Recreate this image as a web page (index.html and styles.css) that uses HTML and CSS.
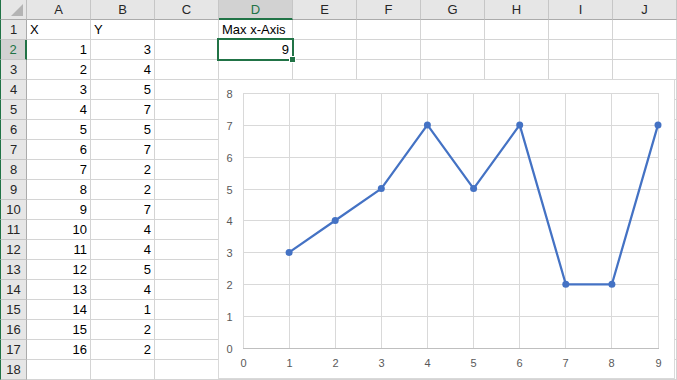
FILE: index.html
```html
<!DOCTYPE html>
<html lang="en">
<head>
    <meta charset="UTF-8">
    <meta name="viewport" content="width=device-width, initial-scale=1.0">
    <title>Max x-Axis</title>
    <link rel="stylesheet" href="styles.css">
</head>
<body>
    <div class="sheet">
        <div class="row head">
            <div class="corner"><span class="tri"></span></div>
            <div class="ch">A</div><div class="ch">B</div><div class="ch">C</div><div class="ch sel">D</div><div class="ch">E</div>
            <div class="ch">F</div><div class="ch">G</div><div class="ch">H</div><div class="ch">I</div><div class="ch">J</div>
        </div>
        <div class="row"><div class="rh">1</div><div class="c">X</div><div class="c">Y</div><div class="c"></div><div class="c">Max x-Axis</div><div class="c"></div><div class="c"></div><div class="c"></div><div class="c"></div><div class="c"></div><div class="c"></div></div>
        <div class="row"><div class="rh sel">2</div><div class="c n">1</div><div class="c n">3</div><div class="c"></div><div class="c n active">9<span class="handle"></span></div><div class="c"></div><div class="c"></div><div class="c"></div><div class="c"></div><div class="c"></div><div class="c"></div></div>
        <div class="row"><div class="rh">3</div><div class="c n">2</div><div class="c n">4</div><div class="c"></div><div class="c"></div><div class="c"></div><div class="c"></div><div class="c"></div><div class="c"></div><div class="c"></div><div class="c"></div></div>
        <div class="row"><div class="rh">4</div><div class="c n">3</div><div class="c n">5</div><div class="c"></div><div class="c"></div><div class="c"></div><div class="c"></div><div class="c"></div><div class="c"></div><div class="c"></div><div class="c"></div></div>
        <div class="row"><div class="rh">5</div><div class="c n">4</div><div class="c n">7</div><div class="c"></div><div class="c"></div><div class="c"></div><div class="c"></div><div class="c"></div><div class="c"></div><div class="c"></div><div class="c"></div></div>
        <div class="row"><div class="rh">6</div><div class="c n">5</div><div class="c n">5</div><div class="c"></div><div class="c"></div><div class="c"></div><div class="c"></div><div class="c"></div><div class="c"></div><div class="c"></div><div class="c"></div></div>
        <div class="row"><div class="rh">7</div><div class="c n">6</div><div class="c n">7</div><div class="c"></div><div class="c"></div><div class="c"></div><div class="c"></div><div class="c"></div><div class="c"></div><div class="c"></div><div class="c"></div></div>
        <div class="row"><div class="rh">8</div><div class="c n">7</div><div class="c n">2</div><div class="c"></div><div class="c"></div><div class="c"></div><div class="c"></div><div class="c"></div><div class="c"></div><div class="c"></div><div class="c"></div></div>
        <div class="row"><div class="rh">9</div><div class="c n">8</div><div class="c n">2</div><div class="c"></div><div class="c"></div><div class="c"></div><div class="c"></div><div class="c"></div><div class="c"></div><div class="c"></div><div class="c"></div></div>
        <div class="row"><div class="rh">10</div><div class="c n">9</div><div class="c n">7</div><div class="c"></div><div class="c"></div><div class="c"></div><div class="c"></div><div class="c"></div><div class="c"></div><div class="c"></div><div class="c"></div></div>
        <div class="row"><div class="rh">11</div><div class="c n">10</div><div class="c n">4</div><div class="c"></div><div class="c"></div><div class="c"></div><div class="c"></div><div class="c"></div><div class="c"></div><div class="c"></div><div class="c"></div></div>
        <div class="row"><div class="rh">12</div><div class="c n">11</div><div class="c n">4</div><div class="c"></div><div class="c"></div><div class="c"></div><div class="c"></div><div class="c"></div><div class="c"></div><div class="c"></div><div class="c"></div></div>
        <div class="row"><div class="rh">13</div><div class="c n">12</div><div class="c n">5</div><div class="c"></div><div class="c"></div><div class="c"></div><div class="c"></div><div class="c"></div><div class="c"></div><div class="c"></div><div class="c"></div></div>
        <div class="row"><div class="rh">14</div><div class="c n">13</div><div class="c n">4</div><div class="c"></div><div class="c"></div><div class="c"></div><div class="c"></div><div class="c"></div><div class="c"></div><div class="c"></div><div class="c"></div></div>
        <div class="row"><div class="rh">15</div><div class="c n">14</div><div class="c n">1</div><div class="c"></div><div class="c"></div><div class="c"></div><div class="c"></div><div class="c"></div><div class="c"></div><div class="c"></div><div class="c"></div></div>
        <div class="row"><div class="rh">16</div><div class="c n">15</div><div class="c n">2</div><div class="c"></div><div class="c"></div><div class="c"></div><div class="c"></div><div class="c"></div><div class="c"></div><div class="c"></div><div class="c"></div></div>
        <div class="row"><div class="rh">17</div><div class="c n">16</div><div class="c n">2</div><div class="c"></div><div class="c"></div><div class="c"></div><div class="c"></div><div class="c"></div><div class="c"></div><div class="c"></div><div class="c"></div></div>
        <div class="row"><div class="rh">18</div><div class="c"></div><div class="c"></div><div class="c"></div><div class="c"></div><div class="c"></div><div class="c"></div><div class="c"></div><div class="c"></div><div class="c"></div><div class="c"></div></div>

        <!-- floating chart, sits over D4:J18 -->
        <div class="chart">
            <svg width="457" height="300" viewBox="0 0 457 300">
                <g class="grid">
                    <line x1="25" y1="14.5" x2="441" y2="14.5"/>
                    <line x1="25" y1="46.5" x2="441" y2="46.5"/>
                    <line x1="25" y1="78.5" x2="441" y2="78.5"/>
                    <line x1="25" y1="110.5" x2="441" y2="110.5"/>
                    <line x1="25" y1="141.5" x2="441" y2="141.5"/>
                    <line x1="25" y1="173.5" x2="441" y2="173.5"/>
                    <line x1="25" y1="205.5" x2="441" y2="205.5"/>
                    <line x1="25" y1="237.5" x2="441" y2="237.5"/>
                    <line x1="25.5" y1="14" x2="25.5" y2="269"/>
                    <line x1="71.5" y1="14" x2="71.5" y2="269"/>
                    <line x1="117.5" y1="14" x2="117.5" y2="269"/>
                    <line x1="163.5" y1="14" x2="163.5" y2="269"/>
                    <line x1="209.5" y1="14" x2="209.5" y2="269"/>
                    <line x1="255.5" y1="14" x2="255.5" y2="269"/>
                    <line x1="301.5" y1="14" x2="301.5" y2="269"/>
                    <line x1="347.5" y1="14" x2="347.5" y2="269"/>
                    <line x1="393.5" y1="14" x2="393.5" y2="269"/>
                    <line x1="440.5" y1="14" x2="440.5" y2="269"/>
                </g>
                <line class="axis" x1="25" y1="269.5" x2="441" y2="269.5"/>
                <g class="ylab">
                    <text x="11.5" y="19">8</text>
                    <text x="11.5" y="51">7</text>
                    <text x="11.5" y="83">6</text>
                    <text x="11.5" y="115">5</text>
                    <text x="11.5" y="146">4</text>
                    <text x="11.5" y="178">3</text>
                    <text x="11.5" y="210">2</text>
                    <text x="11.5" y="242">1</text>
                    <text x="11.5" y="274">0</text>
                </g>
                <g class="xlab">
                    <text x="25.5" y="288">0</text>
                    <text x="71.5" y="288">1</text>
                    <text x="117.5" y="288">2</text>
                    <text x="163.5" y="288">3</text>
                    <text x="209.5" y="288">4</text>
                    <text x="255.5" y="288">5</text>
                    <text x="301.5" y="288">6</text>
                    <text x="347.5" y="288">7</text>
                    <text x="393.5" y="288">8</text>
                    <text x="440.5" y="288">9</text>
                </g>
                <polyline class="series" points="71.1,173.4 117.2,141.5 163.3,109.6 209.4,45.9 255.6,109.6 301.7,45.9 347.8,205.3 393.9,205.3 440,45.9"/>
                <g class="marks">
                    <circle cx="71.1" cy="173.4" r="3.5"/>
                    <circle cx="117.2" cy="141.5" r="3.5"/>
                    <circle cx="163.3" cy="109.6" r="3.5"/>
                    <circle cx="209.4" cy="45.9" r="3.5"/>
                    <circle cx="255.6" cy="109.6" r="3.5"/>
                    <circle cx="301.7" cy="45.9" r="3.5"/>
                    <circle cx="347.8" cy="205.3" r="3.5"/>
                    <circle cx="393.9" cy="205.3" r="3.5"/>
                    <circle cx="440" cy="45.9" r="3.5"/>
                </g>
            </svg>
        </div>
    </div>
</body>
</html>
```

FILE: styles.css
```css
body {
    margin: 0;
    background: #fff;
    font-family: "Liberation Sans", Arial, sans-serif;
    font-size: 13px;
    color: #000;
}
.sheet {
    position: relative;
    width: 677px;
    height: 380px;
    overflow: hidden;
}
.row {
    display: grid;
    grid-template-columns: 27px 64px 64px 64px 74px 64px 64px 64px 64px 64px 64px;
    height: 20px;
}
.row > div {
    box-sizing: border-box;
    height: 20px;
    white-space: nowrap;
    overflow: visible;
}
.c {
    border-right: 1px solid #d4d4d4;
    border-bottom: 1px solid #d4d4d4;
    padding: 1px 3px 0;
    line-height: 18px;
}
.c.n {
    text-align: right;
}
.c.active {
    position: relative;
}
/* selection frame round D2 */
.c.active::before {
    content: "";
    position: absolute;
    left: -2px;
    top: -2px;
    right: -2px;
    bottom: -2px;
    border: 2px solid #217346;
}
.handle {
    position: absolute;
    right: -4px;
    bottom: -4px;
    width: 5px;
    height: 5px;
    background: #217346;
    border: 1px solid #fff;
}
.corner, .ch, .rh {
    background: #e6e6e6;
    color: #262626;
    line-height: 19px;
    text-align: center;
}
.corner {
    display: flex;
    justify-content: flex-end;
    align-items: flex-end;
    padding: 0 3px 3px 0;
    border-left: 1px solid #217346;
    border-right: 1px solid #bdbdbd;
    border-bottom: 1px solid #ababab;
}
.tri {
    width: 0;
    height: 0;
    border-left: 12px solid transparent;
    border-bottom: 12px solid #b4b4b4;
}
.ch {
    border-right: 1px solid #c6c6c6;
    border-bottom: 1px solid #ababab;
}
.ch.sel {
    background: #d2d2d2;
    color: #217346;
    border-bottom: 2px solid #217346;
}
.rh {
    border-left: 1px solid #217346;
    border-right: 1px solid #ababab;
    border-bottom: 1px solid #c6c6c6;
}
.rh.sel {
    background: #d2d2d2;
    color: #217346;
    border-right: 2px solid #217346;
}
.chart {
    position: absolute;
    left: 218px;
    top: 79px;
    width: 457px;
    height: 300px;
    background: #fff;
    box-sizing: border-box;
    border: 1px solid #d9d9d9;
}
.chart svg {
    display: block;
    margin: -1px;
}
.grid line {
    stroke: #d9d9d9;
    stroke-width: 1;
}
.axis {
    stroke: #bfbfbf;
    stroke-width: 1;
}
.ylab text, .xlab text {
    font-family: "Liberation Sans", Arial, sans-serif;
    font-size: 11px;
    fill: #595959;
    text-anchor: middle;
}
.series {
    fill: none;
    stroke: #4472c4;
    stroke-width: 2.25;
    stroke-linejoin: round;
    stroke-linecap: round;
}
.marks circle {
    fill: #4472c4;
}
```
